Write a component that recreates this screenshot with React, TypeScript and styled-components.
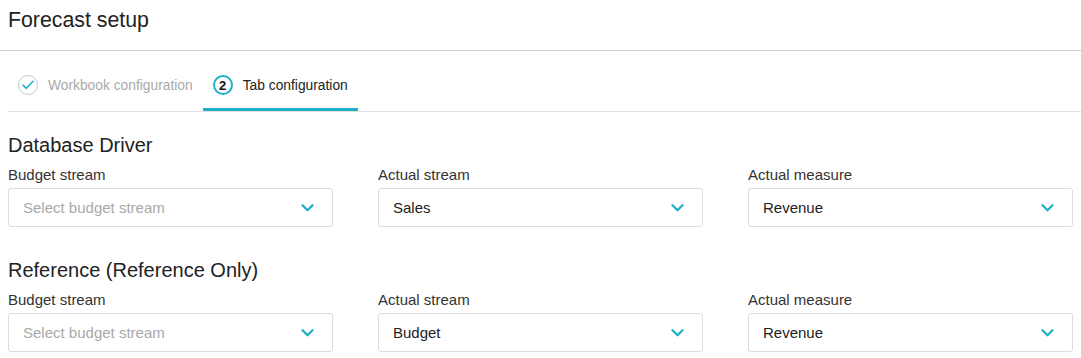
import React from "react";
import styled, { createGlobalStyle } from "styled-components";

const teal = "#1fb0c8";

const Global = createGlobalStyle`
  html, body { margin: 0; padding: 0; background: #fff; }
  body { font-family: "Liberation Sans", Arial, sans-serif; color: #333; }
  * { box-sizing: border-box; }
`;

const Page = styled.div`
  width: 1081px;
`;

const Header = styled.header`
  height: 51px;
  padding: 8px 8px 0;
  border-bottom: 1px solid #cfcfcf;
`;

const Title = styled.h1`
  margin: 0;
  font-size: 21.3px;
  line-height: 24px;
  font-weight: 400;
  color: #222;
`;

const Tabs = styled.nav`
  display: flex;
  margin-left: 8px;
  border-bottom: 1px solid #e0e0e0;
`;

const Tab = styled.div<{ $active?: boolean }>`
  display: flex;
  align-items: center;
  gap: 10px;
  height: 60px;
  padding: 11px 10px 0;
  border-bottom: 3px solid ${(p) => (p.$active ? teal : "transparent")};
  font-size: 13.8px;
  color: ${(p) => (p.$active ? "#222" : "#aaa")};
`;

const StepCircle = styled.span<{ $active?: boolean }>`
  display: flex;
  align-items: center;
  justify-content: center;
  width: 20px;
  height: 20px;
  border-radius: 50%;
  border: ${(p) => (p.$active ? `2px solid ${teal}` : "1px solid #c8c8c8")};
  font-size: 13px;
  font-weight: 700;
  color: #111;
`;

const Content = styled.main`
  display: flex;
  flex-direction: column;
  gap: 32px;
  padding: 22px 8px 0;
`;

const Section = styled.section``;

const SectionTitle = styled.h2`
  margin: 0 0 9px;
  font-size: 20px;
  line-height: 23px;
  font-weight: 400;
  color: #222;
`;

const Grid = styled.div`
  display: grid;
  grid-template-columns: repeat(3, 1fr);
  column-gap: 45px;
`;

const Field = styled.div`
  display: flex;
  flex-direction: column;
  gap: 5px;
`;

const Label = styled.label`
  font-size: 15px;
  line-height: 17px;
  color: #333;
`;

const SelectBox = styled.div`
  display: flex;
  align-items: center;
  justify-content: space-between;
  height: 39px;
  padding: 0 18px 0 14px;
  border: 1px solid #dcdcdc;
  border-radius: 3px;
  background: #fff;
`;

const Value = styled.span<{ $placeholder?: boolean }>`
  font-size: 15px;
  color: ${(p) => (p.$placeholder ? "#a9a9a9" : "#222")};
`;

const Chevron = () => (
  <svg width="13" height="8" viewBox="0 0 13 8" fill="none">
    <path d="M1.5 1.3 L6.5 6.2 L11.5 1.3" stroke={teal} strokeWidth="2.3" strokeLinecap="round" strokeLinejoin="round" />
  </svg>
);

const Check = () => (
  <svg width="12" height="10" viewBox="0 0 12 10" fill="none">
    <path d="M1 5.2 L4.3 8.3 L11 1.3" stroke={teal} strokeWidth="1.6" strokeLinecap="round" strokeLinejoin="round" />
  </svg>
);

type F = { label: string; value: string; placeholder?: boolean };

const Select = ({ label, value, placeholder }: F) => (
  <Field>
    <Label>{label}</Label>
    <SelectBox>
      <Value $placeholder={placeholder}>{value}</Value>
      <Chevron />
    </SelectBox>
  </Field>
);

const sections: { title: string; fields: F[] }[] = [
  {
    title: "Database Driver",
    fields: [
      { label: "Budget stream", value: "Select budget stream", placeholder: true },
      { label: "Actual stream", value: "Sales" },
      { label: "Actual measure", value: "Revenue" },
    ],
  },
  {
    title: "Reference (Reference Only)",
    fields: [
      { label: "Budget stream", value: "Select budget stream", placeholder: true },
      { label: "Actual stream", value: "Budget" },
      { label: "Actual measure", value: "Revenue" },
    ],
  },
];

export default function App() {
  return (
    <Page>
      <Global />
      <Header>
        <Title>Forecast setup</Title>
      </Header>
      <Tabs>
        <Tab>
          <StepCircle>
            <Check />
          </StepCircle>
          Workbook configuration
        </Tab>
        <Tab $active>
          <StepCircle $active>2</StepCircle>
          Tab configuration
        </Tab>
      </Tabs>
      <Content>
        {sections.map((s) => (
          <Section key={s.title}>
            <SectionTitle>{s.title}</SectionTitle>
            <Grid>
              {s.fields.map((f) => (
                <Select key={f.label} {...f} />
              ))}
            </Grid>
          </Section>
        ))}
      </Content>
    </Page>
  );
}
